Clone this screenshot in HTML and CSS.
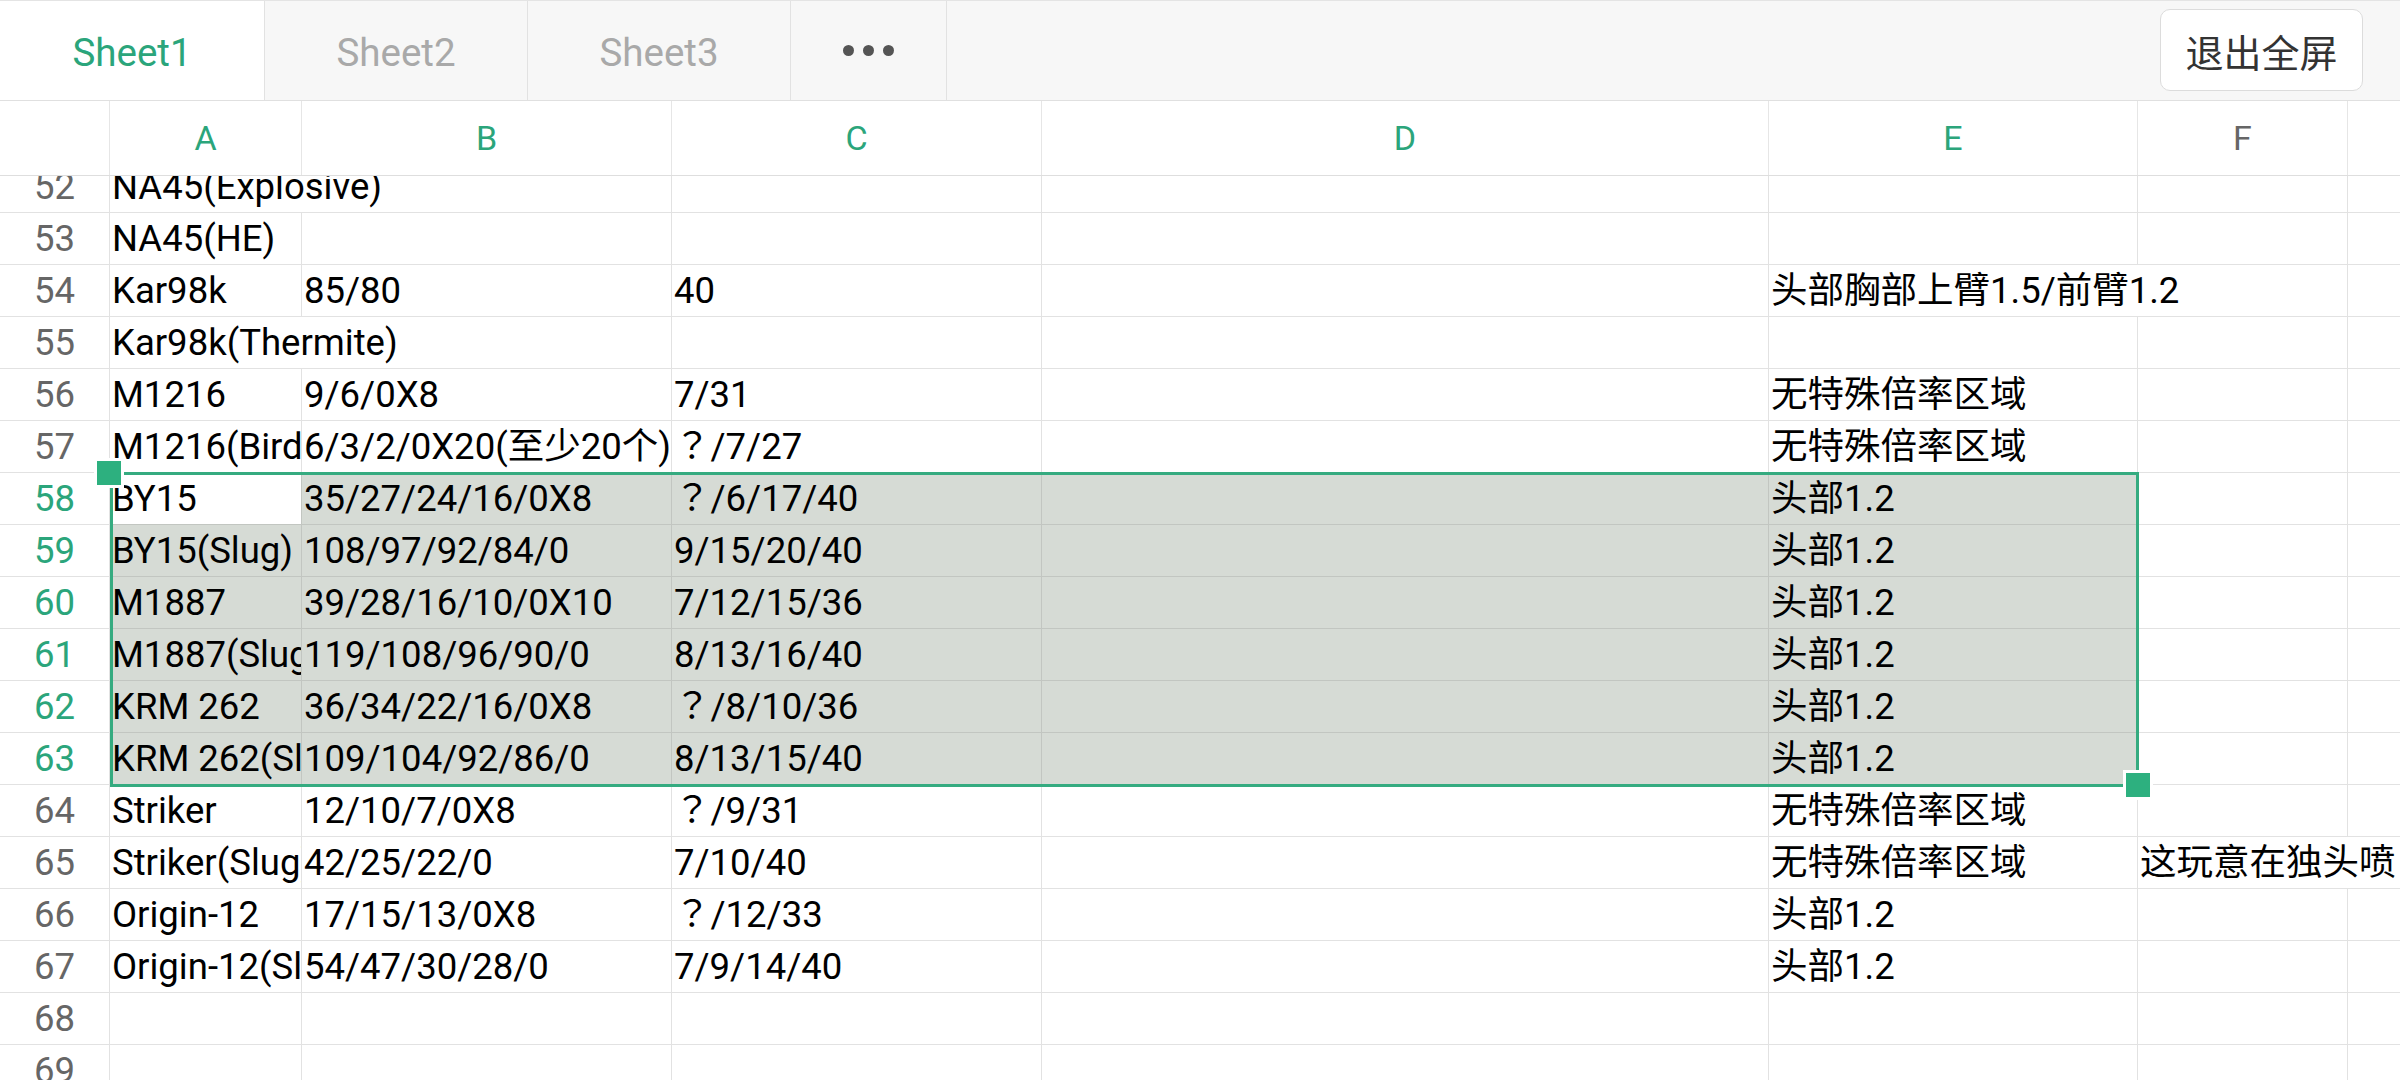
FILE: index.html
```html
<!DOCTYPE html>
<html lang="zh-CN">
<head>
<meta charset="utf-8">
<title>Sheet</title>
<link rel="stylesheet" href="styles.css">
</head>
<body>
<div class="tabbar">
  <div class="tab active">Sheet1</div>
  <div class="tab">Sheet2</div>
  <div class="tab">Sheet3</div>
  <div class="tab more"><span class="dot"></span><span class="dot"></span><span class="dot"></span></div>
  <div class="spacer"></div>
  <div class="exit">退出全屏</div>
</div>
<div class="colhead">
  <div></div>
  <div>A</div>
  <div>B</div>
  <div>C</div>
  <div>D</div>
  <div>E</div>
  <div class="off">F</div>
  <div class="off"></div>
</div>
<div class="grid">
  <div class="rows">
    <div class="row"><div class="c rn">52</div><div class="c s2">NA45(Explosive)</div><div class="c"></div><div class="c"></div><div class="c"></div><div class="c"></div><div class="c"></div></div>
    <div class="row"><div class="c rn">53</div><div class="c">NA45(HE)</div><div class="c"></div><div class="c"></div><div class="c"></div><div class="c"></div><div class="c"></div><div class="c"></div></div>
    <div class="row"><div class="c rn">54</div><div class="c">Kar98k</div><div class="c">85/80</div><div class="c">40</div><div class="c"></div><div class="c s2">头部胸部上臂1.5/前臂1.2</div><div class="c"></div></div>
    <div class="row"><div class="c rn">55</div><div class="c s2">Kar98k(Thermite)</div><div class="c"></div><div class="c"></div><div class="c"></div><div class="c"></div><div class="c"></div></div>
    <div class="row"><div class="c rn">56</div><div class="c">M1216</div><div class="c">9/6/0X8</div><div class="c">7/31</div><div class="c"></div><div class="c">无特殊倍率区域</div><div class="c"></div><div class="c"></div></div>
    <div class="row"><div class="c rn">57</div><div class="c">M1216(Birdshot)</div><div class="c">6/3/2/0X20(至少20个)</div><div class="c"><span class="q">？</span>/7/27</div><div class="c"></div><div class="c">无特殊倍率区域</div><div class="c"></div><div class="c"></div></div>
    <div class="row sel"><div class="c rn">58</div><div class="c x active">BY15</div><div class="c x">35/27/24/16/0X8</div><div class="c x"><span class="q">？</span>/6/17/40</div><div class="c x"></div><div class="c x">头部1.2</div><div class="c"></div><div class="c"></div></div>
    <div class="row sel"><div class="c rn">59</div><div class="c x">BY15(Slug)</div><div class="c x">108/97/92/84/0</div><div class="c x">9/15/20/40</div><div class="c x"></div><div class="c x">头部1.2</div><div class="c"></div><div class="c"></div></div>
    <div class="row sel"><div class="c rn">60</div><div class="c x">M1887</div><div class="c x">39/28/16/10/0X10</div><div class="c x">7/12/15/36</div><div class="c x"></div><div class="c x">头部1.2</div><div class="c"></div><div class="c"></div></div>
    <div class="row sel"><div class="c rn">61</div><div class="c x">M1887(Slug)</div><div class="c x">119/108/96/90/0</div><div class="c x">8/13/16/40</div><div class="c x"></div><div class="c x">头部1.2</div><div class="c"></div><div class="c"></div></div>
    <div class="row sel"><div class="c rn">62</div><div class="c x">KRM 262</div><div class="c x">36/34/22/16/0X8</div><div class="c x"><span class="q">？</span>/8/10/36</div><div class="c x"></div><div class="c x">头部1.2</div><div class="c"></div><div class="c"></div></div>
    <div class="row sel"><div class="c rn">63</div><div class="c x">KRM 262(Slug)</div><div class="c x">109/104/92/86/0</div><div class="c x">8/13/15/40</div><div class="c x"></div><div class="c x">头部1.2</div><div class="c"></div><div class="c"></div></div>
    <div class="row"><div class="c rn">64</div><div class="c">Striker</div><div class="c">12/10/7/0X8</div><div class="c"><span class="q">？</span>/9/31</div><div class="c"></div><div class="c">无特殊倍率区域</div><div class="c"></div><div class="c"></div></div>
    <div class="row"><div class="c rn">65</div><div class="c">Striker(Slug)</div><div class="c">42/25/22/0</div><div class="c">7/10/40</div><div class="c"></div><div class="c">无特殊倍率区域</div><div class="c s2">这玩意在独头喷</div></div>
    <div class="row"><div class="c rn">66</div><div class="c">Origin-12</div><div class="c">17/15/13/0X8</div><div class="c"><span class="q">？</span>/12/33</div><div class="c"></div><div class="c">头部1.2</div><div class="c"></div><div class="c"></div></div>
    <div class="row"><div class="c rn">67</div><div class="c">Origin-12(Slug)</div><div class="c">54/47/30/28/0</div><div class="c">7/9/14/40</div><div class="c"></div><div class="c">头部1.2</div><div class="c"></div><div class="c"></div></div>
    <div class="row"><div class="c rn">68</div><div class="c"></div><div class="c"></div><div class="c"></div><div class="c"></div><div class="c"></div><div class="c"></div><div class="c"></div></div>
    <div class="row"><div class="c rn">69</div><div class="c"></div><div class="c"></div><div class="c"></div><div class="c"></div><div class="c"></div><div class="c"></div><div class="c"></div></div>
  </div>
  <div class="selection"></div>
  <div class="handle tl"></div>
  <div class="handle br"></div>
</div>
</body>
</html>
```

FILE: styles.css
```css
* { box-sizing: border-box; }
html, body { margin: 0; padding: 0; }
body {
  width: 2400px;
  height: 1080px;
  overflow: hidden;
  background: #fff;
  font-family: Roboto, "Noto Sans CJK SC", sans-serif;
  color: #000;
}

.tabbar {
  display: flex;
  align-items: stretch;
  height: 101px;
  background: #f7f7f7;
  border-top: 1px solid #e4e4e4;
  border-bottom: 1px solid #e0e0e0;
}
.tab {
  width: 263px;
  border-right: 1px solid #e2e2e2;
  display: flex;
  align-items: center;
  justify-content: center;
  padding-top: 3px;
  font-size: 38.5px;
  color: #a9a9a9;
}
.tab.active { width: 265px; background: #fff; color: #2ba57b; }
.tab.more { width: 156px; gap: 9px; padding-top: 0; }
.dot { width: 11px; height: 11px; border-radius: 50%; background: #555; }
.spacer { flex: 1; }
.exit {
  align-self: flex-start;
  margin-top: 8px;
  margin-right: 37px;
  width: 203px;
  height: 82px;
  border: 1px solid #dcdcdc;
  border-radius: 10px;
  background: #fff;
  font-family: "Noto Sans CJK SC", sans-serif;
  font-size: 38px;
  color: #333;
  display: flex;
  align-items: center;
  justify-content: center;
}

.colhead, .row {
  display: grid;
  grid-template-columns: 110px 192px 370px 370px 727px 369px 210px 300px;
  width: 2648px;
}
.colhead {
  height: 75px;
  border-bottom: 1px solid #dedede;
}
.colhead > div {
  border-right: 1px solid #e6e6e6;
  display: flex;
  align-items: center;
  justify-content: center;
  font-size: 34px;
  color: #2ba57b;
}
.colhead > .off { color: #666; }

.grid {
  position: relative;
  height: 904px;
  overflow: hidden;
}
.rows { margin-top: -15px; }
.row { height: 52px; }
.c {
  border-right: 1px solid #e2e2e2;
  border-bottom: 1px solid #e2e2e2;
  font-size: 36.5px;
  line-height: 51px;
  white-space: nowrap;
  overflow: hidden;
  padding-left: 2px;
}
.q { font-family: "Noto Sans CJK TC", sans-serif; line-height: 0; }
.c.rn { text-align: center; color: #666; padding: 0; }
.sel .c.rn { color: #2ba57b; }
.s2 { grid-column: span 2; }
.sel .c.x { background: #d6dbd5; border-color: #c2c6c1; }
.sel .c.x.active { background: #fff; }

.selection {
  position: absolute;
  left: 110px;
  top: 296px;
  width: 2029px;
  height: 315px;
  border: 3px solid #35ab80;
}
.handle {
  position: absolute;
  width: 30px;
  height: 30px;
  background: #2db07f;
  border: 3px solid #fff;
}
.handle.tl { left: 94px; top: 282px; }
.handle.br { left: 2123px; top: 594px; }
```
